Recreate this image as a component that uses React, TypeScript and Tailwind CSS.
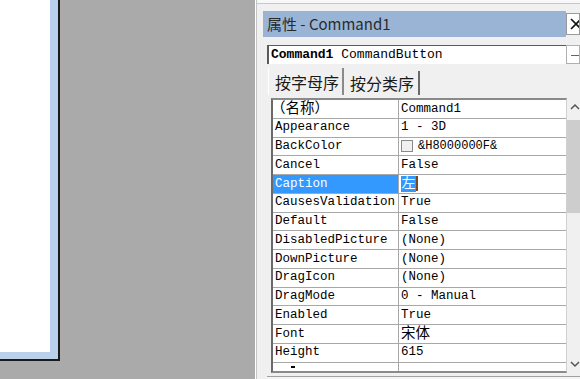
import React from 'react';

interface PropRow {
  name: React.ReactNode;
  value: React.ReactNode;
  selected?: boolean;
}

const cjk = (t: string, size = 'text-[14px]') => <span className={`${size} leading-none`}>{t}</span>;

const rows: PropRow[] = [
  { name: <span className="text-[14.5px] leading-none -ml-[4px]">（名称）</span>, value: 'Command1' },
  { name: 'Appearance', value: '1 - 3D' },
  {
    name: 'BackColor',
    value: (
      <span className="flex items-center gap-[5px]">
        <span className="w-[12px] h-[12px] bg-[#f0f0f0] border border-[#8a8a8a]" />
        <span className="text-[12px]">&amp;H8000000F&amp;</span>
      </span>
    ),
  },
  { name: 'Cancel', value: 'False' },
  {
    name: 'Caption',
    selected: true,
    value: (
      <span className="flex items-center h-full">
        <span className="bg-[#3399ff] text-white text-[14px] leading-[16px] px-[0.5px]">左</span>
        <span className="w-[2px] h-[15px] bg-[#7a4a1e]" />
      </span>
    ),
  },
  { name: 'CausesValidation', value: 'True' },
  { name: 'Default', value: 'False' },
  { name: 'DisabledPicture', value: '(None)' },
  { name: 'DownPicture', value: '(None)' },
  { name: 'DragIcon', value: '(None)' },
  { name: 'DragMode', value: '0 - Manual' },
  { name: 'Enabled', value: 'True' },
  { name: 'Font', value: cjk('宋体', 'text-[14.5px]') },
  { name: 'Height', value: '615' },
];

const GridRow: React.FC<{ row: PropRow }> = ({ row }) => (
  <div className="flex h-[18.77px] border-b border-[#a8a8a8] shrink-0">
    <div
      className={`w-[126px] shrink-0 flex items-center pl-[2px] border-r border-[#a8a8a8] ${
        row.selected ? 'bg-[#3399ff] text-white' : ''
      }`}
    >
      {row.name}
    </div>
    <div className="flex-1 flex items-center pl-[2px]">{row.value}</div>
  </div>
);

export default function App() {
  return (
    <div
      className="w-[580px] h-[379px] flex overflow-hidden bg-[#abaaab] text-black"
      style={{ fontFamily: "'Liberation Mono', 'Noto Sans CJK SC', monospace" }}
    >
      {/* form designer area */}
      <div className="w-[255px] shrink-0 flex flex-col">
        <div className="w-[60px] h-[361px] bg-[#b9d1ea] border-r-2 border-b-2 border-[#1a1a1a] pr-[8px] pb-[7px]">
          <div className="w-full h-full bg-white" />
        </div>
      </div>

      {/* properties window */}
      <div className="flex-1 flex border-l border-white">
        <div className="flex-1 flex flex-col bg-[#f0f0f0] border-l border-[#c4c4c4] min-w-0">
          <div className="h-[4px] bg-[#f8f8f8] border-b border-[#c8c8c8]" />

          <div className="flex mt-[7px] ml-[6px] h-[26px]">
            <div
              className="flex-1 bg-[#9ab4d6] flex items-center pl-[4px] text-[15px] text-[#2a2a2a]"
              style={{ fontFamily: "'Noto Sans CJK SC', 'Noto Sans', sans-serif" }}
            >
              属性 - Command1
            </div>
            <div className="w-[14px] mt-[2px] h-[22px] bg-white border border-[#9a9a9a] flex items-center justify-center overflow-hidden">
              <svg width="12" height="12" viewBox="0 0 12 12" className="ml-[6px] shrink-0">
                <path d="M1 1 L11 11 M11 1 L1 11" stroke="#111" strokeWidth="1.6" />
              </svg>
            </div>
          </div>

          <div className="flex mt-[8px] ml-[10px] h-[19px]">
            <div className="flex-1 bg-white border-l-2 border-t border-[#5a5a5a] flex items-center pl-[2px] text-[13px] whitespace-nowrap">
              <span className="font-bold">Command1</span>
              <span>&nbsp;CommandButton</span>
            </div>
            <div className="w-[14px] bg-white border border-[#b0b0b0] flex items-center justify-center">
              <svg width="8" height="6" viewBox="0 0 8 6" className="ml-[4px] mt-[6px]">
                <path d="M0 0 L8 0" stroke="#333" strokeWidth="1.5" />
              </svg>
            </div>
          </div>

          <div
            className="flex items-end h-[28px] ml-[11px] mt-[3px] text-[16px] text-[#1a1a1a]"
            style={{ fontFamily: "'Noto Sans CJK SC', sans-serif" }}
          >
            <div className="h-[27px] w-[76px] flex items-center justify-center border-l border-white border-r-2 border-r-[#8a8a8a] pl-[3px]">
              按字母序
            </div>
            <div className="h-[24px] w-[76px] flex items-center justify-center border-r-2 border-[#6a6a6a] pl-[2px]">
              按分类序
            </div>
          </div>

          <div className="flex ml-[14px] mt-[3px] h-[275px]">
            <div className="flex-1 flex flex-col border-l-2 border-t-2 border-r border-b-2 border-l-[#6a6a6a] border-t-[#8a8a8a] border-r-[#d0d0d0] border-b-[#8a8a8a] bg-white overflow-hidden text-[12.5px]">
              {rows.map((r, i) => (
                <GridRow key={i} row={r} />
              ))}
              <div className="flex flex-1">
                <div className="w-[126px] border-r border-[#a8a8a8] relative">
                  <span className="absolute left-[18px] top-[3px] w-[4px] h-[2px] bg-black" />
                </div>
              </div>
            </div>
            <div className="w-[13px] shrink-0 bg-[#f0f0f0] flex flex-col items-center">
              <svg width="10" height="8" viewBox="0 0 10 8" className="mt-[5px] ml-[2px]">
                <path d="M1 6 L5 2 L9 6" stroke="#555" strokeWidth="1.5" fill="none" />
              </svg>
              <div className="w-full h-[93px] bg-[#cdcdcd] mt-[9px]" />
              <div className="flex-1" />
              <svg width="10" height="8" viewBox="0 0 10 8" className="mb-[5px] ml-[2px]">
                <path d="M1 2 L5 6 L9 2" stroke="#555" strokeWidth="1.5" fill="none" />
              </svg>
            </div>
          </div>

          <div className="mt-[3px] ml-[10px] flex-1 border-t border-[#a0a0a0] bg-[#f4f4f4]" />
        </div>
      </div>
    </div>
  );
}
